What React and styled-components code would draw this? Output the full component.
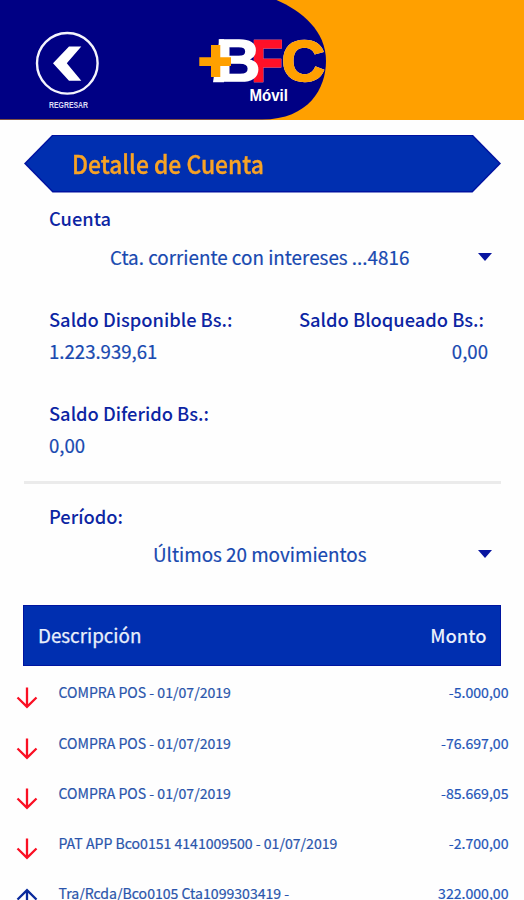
import React from "react";
import styled, { createGlobalStyle } from "styled-components";

const GlobalStyle = createGlobalStyle`
  *, *::before, *::after { box-sizing: border-box; }
  html, body { margin: 0; padding: 0; background: #fefefe; overflow: hidden; }
`;

const Screen = styled.div`
  width: 524px;
  height: 900px;
  overflow: hidden;
  display: flex;
  flex-direction: column;
  background: #fefefe;
  font-family: "Noto Sans CJK SC", "Noto Sans", sans-serif;
  white-space: nowrap;
`;

const Header = styled.header`
  flex: none;
  height: 119.5px;
  display: grid;
  background: #ffa000;
  & > * {
    grid-area: 1 / 1;
    display: block;
  }
`;

const Banner = styled.div`
  flex: none;
  margin: 15px 23px 0 24px;
  height: 58px;
  padding: 1.5px 2px;
  background: #0012a0;
  clip-path: polygon(0 50%, 28.5px 0, calc(100% - 28.5px) 0, 100% 50%, calc(100% - 28.5px) 100%, 28.5px 100%);
`;

const BannerFill = styled.div`
  height: 100%;
  padding-left: 46px;
  display: flex;
  align-items: center;
  background: #002fb0;
  clip-path: polygon(0 50%, 27px 0, calc(100% - 27px) 0, 100% 50%, calc(100% - 27px) 100%, 27px 100%);
`;

const Title = styled.h1`
  margin: 0;
  padding-bottom: 2px;
  color: #f8a325;
  font-size: 25.5px;
  font-weight: 500;
  line-height: 53px;
  transform: scaleX(0.896);
  transform-origin: left;
  -webkit-text-stroke: 0.4px #f8a325;
`;

const Section = styled.section`
  flex: none;
  padding: 0 36px 0 49px;
  margin-top: ${(p) => p.$top}px;
`;

const Label = styled.div`
  height: 24px;
  line-height: 24px;
  font-size: 18.3px;
  font-weight: 500;
  color: #0c25a3;
`;

const Value = styled.div`
  height: 24px;
  line-height: 24px;
  margin-top: 8px;
  font-size: 18.6px;
  color: #1849b0;
  -webkit-text-stroke: 0.2px #1849b0;
`;

const Select = styled.div`
  display: grid;
  grid-template-columns: 1fr 14px;
  align-items: center;
  height: 24px;
  margin-top: ${(p) => p.$gap}px;
  margin-right: -4px;
  padding-left: ${(p) => p.$indent}px;
  line-height: 24px;
  font-size: 18.83px;
  color: #1849b0;
  -webkit-text-stroke: 0.2px #1849b0;
`;

const Caret = styled.svg`
  width: 14px;
  height: 8px;
  display: block;
`;

const Balances = styled.div`
  display: flex;
  justify-content: space-between;
`;

const Balance = styled.div`
  text-align: ${(p) => p.$align || "left"};
  & > ${Label} {
    margin-right: ${(p) => (p.$align ? 4 : 0)}px;
  }
`;

const Divider = styled.div`
  flex: none;
  height: 3px;
  margin: 24px 23px 0 23.5px;
  background: #ebebeb;
`;

const TableHead = styled.div`
  flex: none;
  height: 61px;
  margin: 39px 23px 0 23px;
  padding: 0 13.5px 2px 14px;
  border: 1.5px solid #0015a0;
  display: flex;
  justify-content: space-between;
  align-items: center;
  background: #002fb0;
  color: #e9effb;
  line-height: 56px;
`;

const HeadCell = styled.span`
  font-size: ${(p) => p.$size}px;
  font-weight: ${(p) => p.$weight};
  -webkit-text-stroke: ${(p) => (p.$weight < 500 ? 0.25 : 0)}px #e9effb;
`;

const Movements = styled.ul`
  list-style: none;
  margin: 0;
  padding: 15.4px 15.5px 0 16px;
`;

const Movement = styled.li`
  display: grid;
  grid-template-columns: 42.5px 1fr auto;
  align-items: start;
  height: 50.25px;
  line-height: 23px;
  font-size: 14.08px;
  color: #2a55ab;
  -webkit-text-stroke: 0.2px currentColor;
`;

const Arrow = styled.svg`
  display: block;
  width: 22px;
  height: 22px;
  margin-top: 6px;
  fill: none;
  stroke: ${(p) => (p.$up ? "#0a2a9c" : "#fa0f23")};
  stroke-width: 2.3;
  transform: ${(p) => (p.$up ? "scaleY(-1)" : "none")};
`;

const Amount = styled.span`
  color: #2355b8;
  font-size: 14.1px;
`;

const LogoLetter = styled.text`
  fill: ${(p) => p.$color};
  stroke: ${(p) => p.$color};
  stroke-width: ${(p) => p.$bold}px;
  filter: drop-shadow(0 0 0.7px #f6e6f0);
`;

const LOGO_FONT = '"Liberation Sans", Arial, sans-serif';

function Brand() {
  return (
    <svg width="524" height="119.5" viewBox="0 0 524 119.5">
      <path
        d="M0 0H276.5C302 11 326 31 326 61C326 88 309 119.5 262 119.5H0Z"
        fill="#000084"
      />
      <g fontFamily={LOGO_FONT} fontWeight="700">
        <circle cx="67.3" cy="63.3" r="30.3" fill="none" stroke="#f4f4fd" strokeWidth="2.4" />
        <path d="M69 46.5H81.3L66.8 63.2L81.3 80.7H69L53 63.3Z" fill="#fff" />
        <text x="49" y="108" fontSize="9.8" fill="#dcdcf5" textLength="39" lengthAdjust="spacingAndGlyphs">REGRESAR</text>
        <text x="249.5" y="101.3" fontSize="15.6" fill="#fff" textLength="38.5" lengthAdjust="spacingAndGlyphs">Móvil</text>
        <LogoLetter transform="translate(251.5 80.8) scale(.88 .98)" fontSize="58" $color="#ff1028" $bold={2.4}>F</LogoLetter>
        <LogoLetter transform="translate(281.6 80.6) scale(1.03 .97)" fontSize="58.5" $color="#ffa000" $bold={1.6}>C</LogoLetter>
        <path d="M219.5 39.2L213 82.2H224V39.2Z" fill="#fff" />
        <text transform="translate(215.5 81.3) scale(1.07 1.02)" fontSize="58" fill="#fff" stroke="#fff" strokeWidth="1.6">B</text>
      </g>
      <path d="M211 45H220.3V57.2H231V66H220.3V77H211V66H199.3V57.2H211Z" fill="#ffa000" />
    </svg>
  );
}

function Dropdown({ indent, gap, children }) {
  return (
    <Select $indent={indent} $gap={gap}>
      <span>{children}</span>
      <Caret viewBox="0 0 14 8">
        <path d="M0 0H14L7 8Z" fill="#0815a0" />
      </Caret>
    </Select>
  );
}

const MOVEMENTS = [
  { text: "COMPRA POS - 01/07/2019", amount: "-5.000,00" },
  { text: "COMPRA POS - 01/07/2019", amount: "-76.697,00" },
  { text: "COMPRA POS - 01/07/2019", amount: "-85.669,05" },
  { text: "PAT APP Bco0151 4141009500 - 01/07/2019", amount: "-2.700,00" },
  { text: "Tra/Rcda/Bco0105 Cta1099303419 -", amount: "322.000,00", up: true },
];

export default function App() {
  return (
    <Screen>
      <GlobalStyle />
      <Header>
        <Brand />
      </Header>
      <Banner>
        <BannerFill>
          <Title>Detalle de Cuenta</Title>
        </BannerFill>
      </Banner>
      <Section $top={13.5}>
        <Label>Cuenta</Label>
        <Dropdown indent={61} gap={15}>Cta. corriente con intereses ...4816</Dropdown>
      </Section>
      <Section $top={38}>
        <Balances>
          <Balance>
            <Label>Saldo Disponible Bs.:</Label>
            <Value>1.223.939,61</Value>
          </Balance>
          <Balance $align="right">
            <Label>Saldo Bloqueado Bs.:</Label>
            <Value>0,00</Value>
          </Balance>
        </Balances>
      </Section>
      <Section $top={38}>
        <Balance>
          <Label>Saldo Diferido Bs.:</Label>
          <Value>0,00</Value>
        </Balance>
      </Section>
      <Divider />
      <Section $top={20}>
        <Label>Período:</Label>
        <Dropdown indent={104} gap={14}>Últimos 20 movimientos</Dropdown>
      </Section>
      <TableHead>
        <HeadCell $weight={400} $size={18.8}>Descripción</HeadCell>
        <HeadCell $weight={500} $size={18.4}>Monto</HeadCell>
      </TableHead>
      <Movements>
        {MOVEMENTS.map((m, i) => (
          <Movement key={i}>
            <Arrow viewBox="0 0 22 22" $up={m.up}>
              <path d="M11 0.5V20M1.5 10.5L11 19.8L20.5 10.5" />
            </Arrow>
            <span>{m.text}</span>
            <Amount>{m.amount}</Amount>
          </Movement>
        ))}
      </Movements>
    </Screen>
  );
}
